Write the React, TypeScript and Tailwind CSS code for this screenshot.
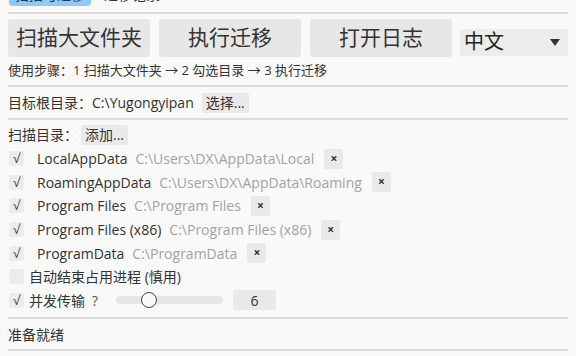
import { useState } from "react";

const font = { fontFamily: '"Open Sans", "Noto Sans CJK SC", sans-serif' };

const dirs = [
  { name: "LocalAppData", path: "C:\\Users\\DX\\AppData\\Local" },
  { name: "RoamingAppData", path: "C:\\Users\\DX\\AppData\\Roaming" },
  { name: "Program Files", path: "C:\\Program Files" },
  { name: "Program Files (x86)", path: "C:\\Program Files (x86)" },
  { name: "ProgramData", path: "C:\\ProgramData" },
];

function Check({ on }: { on: boolean }) {
  return (
    <span className="flex h-[15px] w-[15px] shrink-0 items-center justify-center rounded-[2px] bg-[#ececec] text-[13px] leading-none text-[#444]">
      {on ? "√" : ""}
    </span>
  );
}

function Divider() {
  return <div className="h-[2px] bg-[#dcdcdc]" />;
}

export default function App() {
  const [threads] = useState(6);

  return (
    <div
      className="h-[356px] w-[576px] overflow-hidden bg-[#f9f9f9] px-[8px] text-[#333]"
      style={font}
    >
      {/* Tabs (mostly scrolled off) */}
      <div className="-mt-[16px] flex h-[22px] items-center gap-[13px] pl-[1px] text-[14px]">
        <span className="rounded-[4px] bg-[#90c8f6] px-[6px] leading-[22px] text-[#1d3a57]">
          扫描与迁移
        </span>
        <span className="leading-[22px] text-[#333]">迁移记录</span>
      </div>
      <div className="mt-[6px]">
        <Divider />
      </div>

      {/* Main actions */}
      <div className="mt-[5px] flex h-[38px] items-center gap-[9px]">
        {["扫描大文件夹", "执行迁移", "打开日志"].map((t) => (
          <button
            key={t}
            className="flex h-[38px] w-[142px] items-center justify-center whitespace-nowrap rounded-[3px] bg-[#e7e7e7] text-[21px] text-[#333]"
          >
            {t}
          </button>
        ))}
        <div className="ml-[-1px] flex h-[27px] w-[108px] translate-y-[4px] items-center justify-between rounded-[2px] bg-[#ececec] pl-[4px] pr-[8px] text-[20px] text-[#222]">
          <span>中文</span>
          <svg width="10" height="7" viewBox="0 0 10 7">
            <path d="M0 0h10L5 7z" fill="#333" />
          </svg>
        </div>
      </div>

      <div className="flex h-[28px] items-center whitespace-nowrap text-[13px] text-[#333]">
        使用步骤：1 扫描大文件夹 → 2 勾选目录 → 3 执行迁移
      </div>
      <Divider />

      {/* Target root */}
      <div className="flex h-[31px] items-center gap-[8px] text-[14px]">
        <span>目标根目录：C:\Yugongyipan</span>
        <span className="rounded-[2px] bg-[#e9e9e9] px-[4px] leading-[20px]">
          选择...
        </span>
      </div>
      <Divider />

      {/* Scan dirs */}
      <div className="flex h-[28px] items-center gap-[7px] pt-[1px] text-[14px]">
        <span>扫描目录：</span>
        <span className="-ml-[4px] rounded-[2px] bg-[#e9e9e9] px-[4px] leading-[20px]">
          添加...
        </span>
      </div>

      <div className="-mt-[1px] flex flex-col">
        {dirs.map((d) => (
          <div key={d.name} className="flex h-[23.6px] items-center pl-[1px] text-[14px]">
            <Check on />
            <span className="ml-[13px] text-[#333]">{d.name}</span>
            <span className="ml-[8px] text-[#a3a3a3]">{d.path}</span>
            <span className="ml-[10px] flex h-[20px] w-[19px] items-center justify-center rounded-[2px] bg-[#e9e9e9] text-[12px] font-bold leading-none text-[#333]">
              ×
            </span>
          </div>
        ))}

        <div className="flex h-[23.6px] items-center gap-[5px] pl-[1px] text-[14px]">
          <Check on={false} />
          <span>自动结束占用进程 (慎用)</span>
        </div>

        <div className="flex h-[23.6px] items-center pl-[1px] text-[14px]">
          <Check on />
          <span className="ml-[5px]">并发传输</span>
          <span className="ml-[7px] text-[#555]">?</span>
          <div className="relative ml-[18px] h-[8px] w-[107px] rounded-full bg-[#e6e6e6]">
            <span className="absolute left-[25px] top-1/2 h-[16px] w-[16px] -translate-y-1/2 rounded-full border-[1.5px] border-[#444] bg-[#f9f9f9]" />
          </div>
          <span className="ml-[10px] flex h-[20px] w-[43px] items-center justify-center rounded-[2px] bg-[#e9e9e9] text-[14px]">
            {threads}
          </span>
        </div>
      </div>

      <div className="mt-[5px]">
        <Divider />
      </div>
      <div className="flex h-[30px] items-center pt-[1px] text-[14px] text-[#333]">准备就绪</div>
      <Divider />
    </div>
  );
}
